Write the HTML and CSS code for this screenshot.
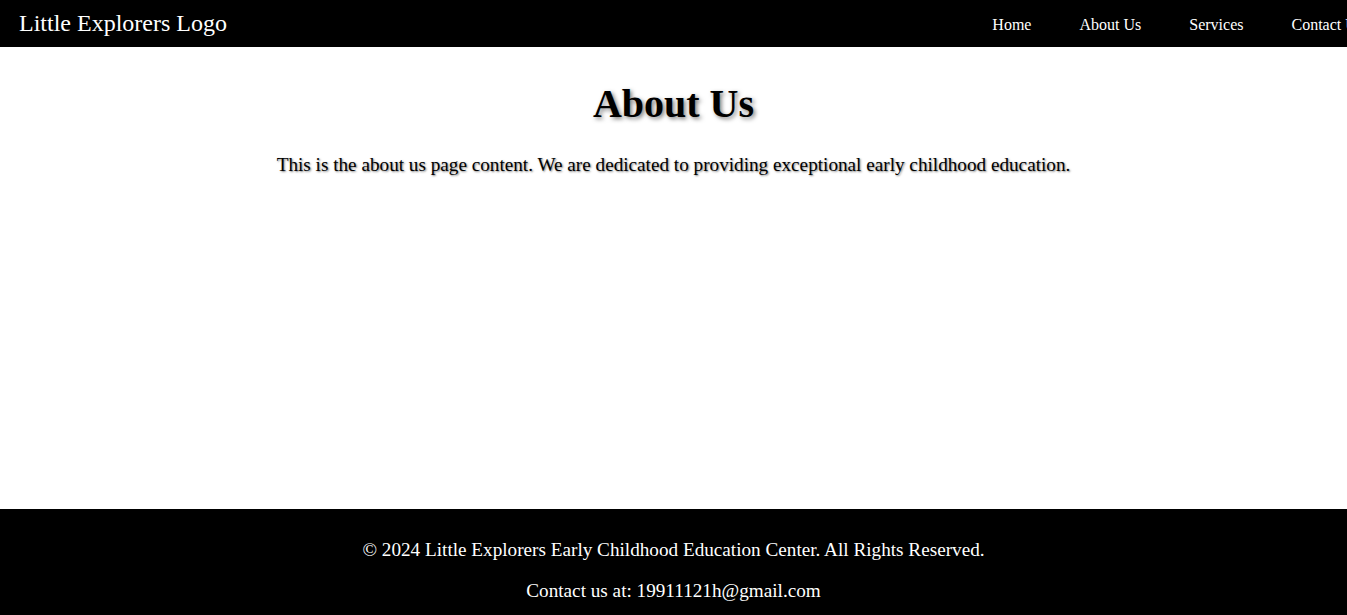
FILE: index.html
```html
<!DOCTYPE html>
<html lang="en">
<head>
<meta charset="utf-8">
<title>About Us - Little Explorers</title>
<link rel="stylesheet" href="styles.css">
</head>
<body>
<header class="site-header">
  <div class="logo">Little Explorers Logo</div>
  <nav class="main-nav">
    <ul class="nav-list">
      <li><a href="#">Home</a></li>
      <li><a href="#">About Us</a></li>
      <li><a href="#">Services</a></li>
      <li><a href="#">Contact Us</a></li>
    </ul>
  </nav>
</header>
<main class="content">
  <h1 class="page-title">About Us</h1>
  <p class="intro">This is the about us page content. We are dedicated to providing exceptional early childhood education.</p>
</main>
<footer class="site-footer">
  <p>&copy; 2024 Little Explorers Early Childhood Education Center. All Rights Reserved.</p>
  <p>Contact us at: 19911121h@gmail.com</p>
</footer>
</body>
</html>
```
FILE: styles.css
```css
html, body {
  margin: 0;
  padding: 0;
  overflow-x: hidden;
}
body {
  font-family: "Liberation Serif", "Times New Roman", serif;
  color: #000;
  background: #fff;
}
.site-header {
  background: #000;
  color: #fff;
  width: 100%;
  height: 47px;
  padding: 0 20px 0 19px;
  display: flex;
  align-items: center;
  justify-content: space-between;
}
.logo {
  font-size: 24px;
  line-height: 28px;
  padding-bottom: 2px;
}
.main-nav {
  margin-right: 3px;
}
.nav-list {
  list-style: none;
  margin: 0;
  padding: 0;
  display: flex;
  gap: 48px;
}
.nav-list a {
  color: #fff;
  text-decoration: none;
  font-size: 16px;
  line-height: 18px;
  display: block;
  padding-top: 2px;
}
.content {
  min-height: 462px;
  text-align: center;
  padding-top: 8px;
  box-sizing: border-box;
  display: flow-root;
}
.page-title {
  font-size: 40px;
  margin: 25px 0 27px;
  text-shadow: 2px 2px 4px rgba(0, 0, 0, 0.5);
}
.intro {
  font-size: 19.2px;
  margin: 0;
  text-shadow: 1px 1px 2px rgba(0, 0, 0, 0.5);
}
.site-footer {
  background: #000;
  color: #fff;
  text-align: center;
  padding: 11px 0 10px;
}
.site-footer p {
  font-size: 19.2px;
  margin: 19.2px 0;
}
```
